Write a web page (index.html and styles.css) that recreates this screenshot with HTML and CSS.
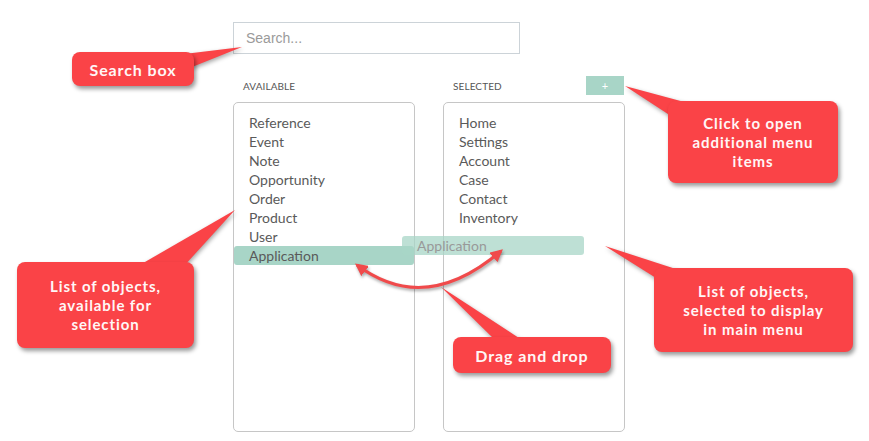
FILE: index.html
```html
<!DOCTYPE html>
<html>
<head>
<meta charset="utf-8">
<link rel="stylesheet" href="styles.css">
</head>
<body>
<div class="app">
  <input class="search" type="text" placeholder="Search...">
  <div class="columns">
    <section class="col">
      <div class="col-head"><span class="col-title">AVAILABLE</span></div>
      <ul class="list">
        <li>Reference</li>
        <li>Event</li>
        <li>Note</li>
        <li>Opportunity</li>
        <li>Order</li>
        <li>Product</li>
        <li>User</li>
        <li class="active">Application</li>
      </ul>
    </section>
    <section class="col">
      <div class="col-head"><span class="col-title">SELECTED</span><button class="add">+</button></div>
      <ul class="list">
        <li>Home</li>
        <li>Settings</li>
        <li>Account</li>
        <li>Case</li>
        <li>Contact</li>
        <li>Inventory</li>
      </ul>
    </section>
  </div>
</div>

<div class="ghost">Application</div>

<svg class="overlay" width="869" height="441" viewBox="0 0 869 441">
  <defs>
    <marker id="head" viewBox="0 0 10 10" refX="8" refY="5" markerWidth="4.2" markerHeight="4.2" orient="auto-start-reverse" markerUnits="strokeWidth">
      <path d="M0 0 L10 5 L0 10 Z" fill="#f04a4b"/>
    </marker>
  </defs>
  <g class="tails">
    <polygon points="176,55 242,47 192,67"/>
    <polygon points="625,86 688,103 671,116"/>
    <polygon points="138,266 235,210 184,266"/>
    <polygon points="605,246 682,271 656,278"/>
    <polygon points="441,287 495,340 522,340"/>
  </g>
  <path class="arrow" d="M357 265 Q425 316 501 251" marker-start="url(#head)" marker-end="url(#head)"/>
</svg>

<div class="callout c-search">Search box</div>
<div class="callout c-add">Click to open<br>additional menu<br>items</div>
<div class="callout c-avail">List of objects,<br>available for<br>selection</div>
<div class="callout c-sel">List of objects,<br>selected to display<br>in main menu</div>
<div class="callout c-drag">Drag and drop</div>
</body>
</html>
```

FILE: styles.css
```css
html, body {
  margin: 0;
  padding: 0;
  background: #ffffff;
}

body {
  position: relative;
  width: 869px;
  height: 441px;
  overflow: hidden;
  font-family: "Lato", "Liberation Sans", sans-serif;
}

.app {
  padding: 22px 0 0 233px;
}

.search {
  display: block;
  box-sizing: border-box;
  width: 287px;
  height: 32px;
  margin: 0;
  padding: 0 12px;
  border: 1px solid #ccd3d8;
  border-radius: 0;
  font-family: "Liberation Sans", Arial, sans-serif;
  font-size: 14px;
  color: #555;
  outline: none;
}

.search::placeholder {
  color: #9a9a9a;
}

.columns {
  display: flex;
  gap: 28px;
  margin-top: 22px;
}

.col {
  width: 182px;
}

.col-head {
  display: flex;
  align-items: center;
  justify-content: space-between;
  height: 19px;
  margin-bottom: 7px;
  padding-left: 10px;
}

.col-title {
  font-family: "Lato", "Liberation Sans", sans-serif;
  font-size: 10px;
  color: #555;
  letter-spacing: 0.1px;
}

.add {
  width: 38px;
  height: 19px;
  margin: 0 1px 0 0;
  padding: 0;
  border: none;
  border-radius: 0;
  background: #a8d5c7;
  color: #ffffff;
  font-family: "Lato", sans-serif;
  font-size: 11px;
  line-height: 19px;
}

.list {
  box-sizing: border-box;
  height: 330px;
  margin: 0;
  padding: 10px 0 0 0;
  list-style: none;
  border: 1px solid #c6c6c6;
  border-radius: 5px;
}

.list li {
  height: 19px;
  line-height: 19px;
  padding-left: 15px;
  font-size: 14px;
  color: #5a5a5a;
}

.list li.active {
  background: #a8d5c7;
  border-radius: 3px;
}

.ghost {
  position: absolute;
  left: 402px;
  top: 236px;
  width: 182px;
  height: 19px;
  box-sizing: border-box;
  padding-left: 15px;
  line-height: 19px;
  font-size: 14px;
  color: #999;
  background: rgba(168, 213, 199, 0.75);
  border-radius: 3px;
}

.overlay {
  position: absolute;
  left: 0;
  top: 0;
  pointer-events: none;
}

.tails polygon {
  fill: #fa4347;
  filter: drop-shadow(1px 2px 2px rgba(0, 0, 0, 0.35));
}

.arrow {
  fill: none;
  stroke: #f04a4b;
  stroke-width: 3;
  filter: drop-shadow(1px 2px 1.5px rgba(0, 0, 0, 0.35));
}

.callout {
  position: absolute;
  box-sizing: border-box;
  display: flex;
  align-items: center;
  justify-content: center;
  text-align: center;
  background: #fa4347;
  color: #fff6f6;
  border-radius: 8px;
  box-shadow: 2px 3px 4px rgba(0, 0, 0, 0.4);
  font-family: "Lato", "Liberation Sans", sans-serif;
  font-weight: 700;
  font-size: 15px;
  letter-spacing: 0.9px;
  line-height: 19px;
}

.c-search {
  left: 72px;
  top: 52px;
  width: 122px;
  height: 34px;
  font-size: 16px;
}

.c-add {
  left: 668px;
  top: 101px;
  width: 170px;
  height: 82px;
}

.c-avail {
  left: 17px;
  top: 262px;
  width: 177px;
  height: 86px;
}

.c-sel {
  left: 654px;
  top: 268px;
  width: 199px;
  height: 84px;
}

.c-drag {
  left: 453px;
  top: 337px;
  width: 158px;
  height: 36px;
  font-size: 16px;
}
```
